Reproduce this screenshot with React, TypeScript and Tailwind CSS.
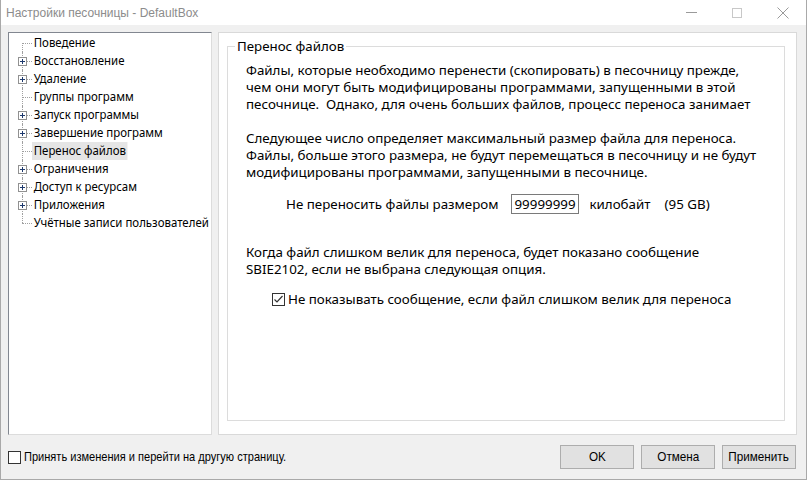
import React from "react";

const treeItems: {label: string; expandable: boolean; selected?: boolean}[] = [
  {label: "Поведение", expandable: false},
  {label: "Восстановление", expandable: true},
  {label: "Удаление", expandable: true},
  {label: "Группы программ", expandable: false},
  {label: "Запуск программы", expandable: true},
  {label: "Завершение программ", expandable: true},
  {label: "Перенос файлов", expandable: false, selected: true},
  {label: "Ограничения", expandable: true},
  {label: "Доступ к ресурсам", expandable: true},
  {label: "Приложения", expandable: true},
  {label: "Учётные записи пользователей", expandable: false},
];

const uiFont = {fontFamily: '"Noto Sans", "DejaVu Sans", sans-serif'};
const narrowFont = {fontFamily: '"Liberation Sans", Arial, sans-serif'};

const TreeRow: React.FC<{label: string; expandable: boolean; selected?: boolean; last: boolean; first: boolean}> = ({
  label,
  expandable,
  selected,
  last,
  first,
}) => (
  <div className="relative flex h-[18px] items-center">
    {/* dotted connector */}
    <div
      className={`absolute left-[13px] w-0 border-l border-dotted border-[#a0a0a0] ${first ? "top-[9px]" : "top-0"} ${
        last ? "h-[9px]" : "bottom-0"
      }`}
    />
    <div className="absolute left-[13px] top-[9px] w-[10px] border-t border-dotted border-[#a0a0a0]" />
    {expandable && (
      <div className="absolute left-[9px] top-[5px] flex h-[9px] w-[9px] items-center justify-center border border-[#919191] bg-white">
        <svg width="7" height="7" viewBox="0 0 7 7">
          <path d="M1 3.5h5M3.5 1v5" stroke="#1e3a6e" strokeWidth="1" shapeRendering="crispEdges" />
        </svg>
      </div>
    )}
    <div
      className={`ml-[23px] flex h-[18px] origin-left scale-x-[0.86] items-center whitespace-nowrap px-[2px] text-[13.3px] leading-none text-black ${
        selected ? "bg-[#e5e5e5]" : ""
      }`}
    >
      {label}
    </div>
  </div>
);

const Checkbox: React.FC<{checked?: boolean}> = ({checked}) => (
  <div className="flex h-[13px] w-[13px] shrink-0 items-center justify-center border border-[#333333] bg-white">
    {checked && (
      <svg width="11" height="11" viewBox="0 0 11 11">
        <path d="M1.5 5.5l2.5 2.5 5.5-6" fill="none" stroke="#333" strokeWidth="1.2" />
      </svg>
    )}
  </div>
);

const Line: React.FC<{children: React.ReactNode}> = ({children}) => (
  <div className="h-[17px] whitespace-pre text-[13.35px] leading-[17px] text-black">{children}</div>
);

export default function App() {
  return (
    <div className="flex h-[480px] w-[807px] flex-col overflow-hidden border-x border-b border-[#a9a9a9] bg-[#f0f0f0]" style={uiFont}>
      {/* title bar */}
      <div className="flex h-[25px] shrink-0 items-center bg-white">
        <div className="ml-[5px] text-[12px] text-[#8c8c8c]" style={narrowFont}>
          Настройки песочницы - DefaultBox
        </div>
        <div className="ml-auto flex items-center">
          <div className="flex w-[46px] items-center justify-center">
            <div className="h-0 w-[11px] border-t border-[#9a9a9a]" />
          </div>
          <div className="flex w-[46px] items-center justify-center">
            <div className="h-[10px] w-[10px] border border-[#c8c8c8]" />
          </div>
          <div className="flex w-[46px] items-center justify-center">
            <svg width="12" height="12" viewBox="0 0 12 12">
              <path d="M0.5 0.5l11 11M11.5 0.5l-11 11" stroke="#9a9a9a" strokeWidth="1" />
            </svg>
          </div>
        </div>
      </div>

      {/* body */}
      <div className="flex h-[410px] shrink-0 gap-[6px] pl-[7px] pr-[9px] pt-[7px]">
        {/* tree */}
        <div className="w-[204px] shrink-0 overflow-hidden border border-b-[#dcdcdc] border-l-[#828790] border-r-[#dcdcdc] border-t-[#828790] bg-white pt-[1px]">
          {treeItems.map((item, i) => (
            <TreeRow
              key={item.label}
              label={item.label}
              expandable={item.expandable}
              selected={item.selected}
              first={i === 0}
              last={i === treeItems.length - 1}
            />
          ))}
        </div>

        {/* page */}
        <div className="flex flex-1 border border-[#d9d9d9] bg-white pb-[13px] pl-[8px] pr-[11px] pt-[13px]">
          <div className="relative flex flex-1 flex-col border border-[#dcdcdc] pl-[18px] pt-[15px]">
            <div className="absolute -top-[10px] left-[7px] bg-white px-[2px] text-[13.3px] leading-[18px] text-black">
              Перенос файлов
            </div>

            <div>
              <Line>Файлы, которые необходимо перенести (скопировать) в песочницу прежде,</Line>
              <Line>чем они могут быть модифицированы программами, запущенными в этой</Line>
              <Line>песочнице.  Однако, для очень больших файлов, процесс переноса занимает</Line>
            </div>

            <div className="mt-[17px]">
              <Line>Следующее число определяет максимальный размер файла для переноса.</Line>
              <Line>Файлы, больше этого размера, не будут перемещаться в песочницу и не будут</Line>
              <Line>модифицированы программами, запущенными в песочнице.</Line>
            </div>

            <div className="ml-[40px] mt-[13px] flex h-[20px] items-center text-[13.35px] text-black">
              <span>Не переносить файлы размером</span>
              <div className="ml-[13px] flex h-[20px] w-[68px] items-center border border-[#7a7a7a] pl-[2px]">99999999</div>
              <span className="ml-[10px]">килобайт</span>
              <span className="ml-[14px]">(95 GB)</span>
            </div>

            <div className="mt-[30px]">
              <Line>Когда файл слишком велик для переноса, будет показано сообщение</Line>
              <Line>SBIE2102, если не выбрана следующая опция.</Line>
            </div>

            <div className="ml-[26px] mt-[11px] flex items-center gap-[3px] text-[13.35px] text-black">
              <Checkbox checked />
              <span>Не показывать сообщение, если файл слишком велик для переноса</span>
            </div>
          </div>
        </div>
      </div>

      {/* bottom bar */}
      <div className="flex flex-1 items-center pl-[7px] pr-[10px]" style={narrowFont}>
        <Checkbox />
        <span className="ml-[3px] inline-block origin-left scale-x-[0.85] whitespace-nowrap text-[13px] text-black">
          Принять изменения и перейти на другую страницу.
        </span>
        <div className="ml-auto flex gap-[7px]">
          <button className="h-[24px] w-[74px] border border-[#adadad] bg-[#e1e1e1] text-[13px] text-black">
            <span className="inline-block scale-x-[0.9]">OK</span>
          </button>
          <button className="h-[24px] w-[74px] border border-[#adadad] bg-[#e1e1e1] text-[13px] text-black">
            <span className="inline-block scale-x-[0.9]">Отмена</span>
          </button>
          <button className="h-[24px] w-[74px] border border-[#adadad] bg-[#e1e1e1] text-[13px] text-black">
            <span className="inline-block scale-x-[0.9]">Применить</span>
          </button>
        </div>
      </div>
    </div>
  );
}
